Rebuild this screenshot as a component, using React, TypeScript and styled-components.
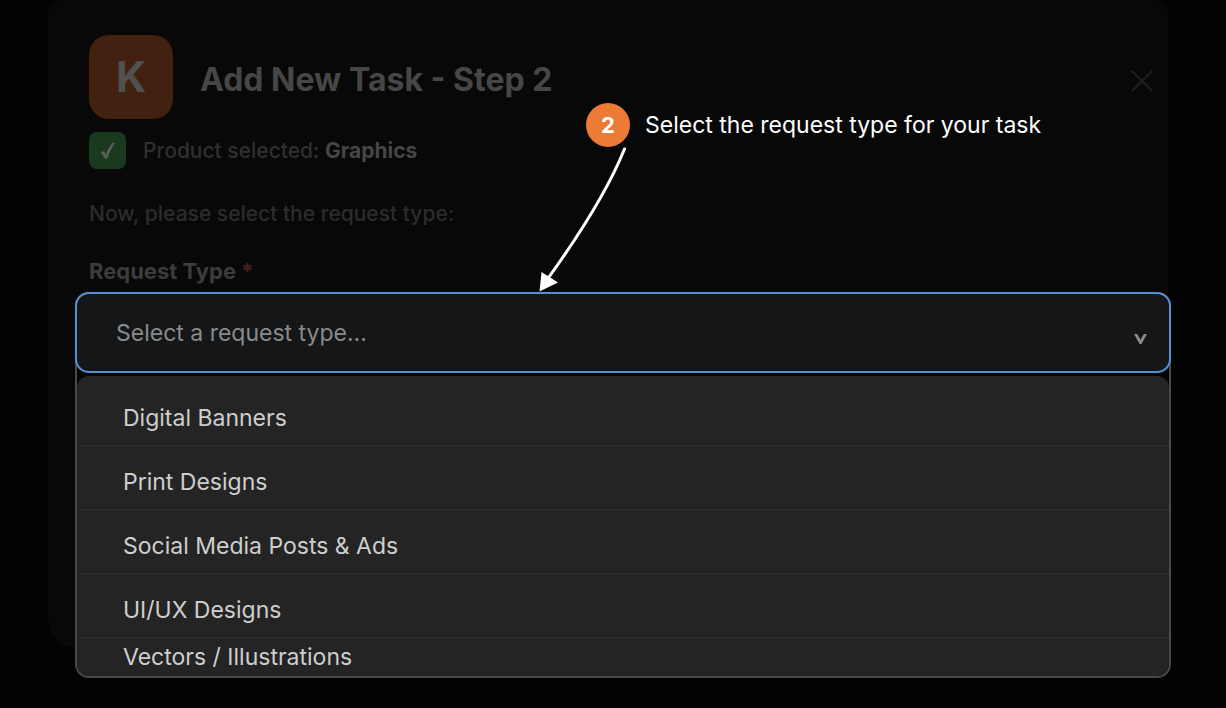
import React, { useState } from "react";
import styled, { createGlobalStyle } from "styled-components";

const GlobalStyle = createGlobalStyle`
  * { box-sizing: border-box; }
  body {
    margin: 0;
    background: #030303;
    font-family: Inter, "Liberation Sans", sans-serif;
    font-size: 22px;
    line-height: 28px;
  }
`;

const Page = styled.main`
  min-height: 100vh;
  padding: 0 58px 0 48px;
`;

const Card = styled.form`
  position: relative;
  padding: 35px 11px 275px 41px;
  border-radius: 14px 14px 28px 28px;
  background: #080808;
`;

const Header = styled.header`
  display: flex;
  align-items: center;
  gap: 27px;
`;

const Logo = styled.div`
  display: grid;
  place-items: center;
  width: 84px;
  height: 84px;
  border-radius: 20px;
  background: #422110;
  color: #505050;
  font-size: 42px;
  font-weight: 700;
`;

const Title = styled.h1`
  flex: 1;
  margin: 0;
  padding-top: 6px;
  color: #464646;
  font-size: 32px;
  line-height: 40px;
  font-weight: 700;
`;

const CloseButton = styled.button`
  display: grid;
  place-items: center;
  padding: 8px 4px 0;
  border: 0;
  background: none;
  color: #1e1e1e;
`;

const Status = styled.p`
  display: flex;
  align-items: center;
  gap: 17px;
  margin: 13px 0 0;
  color: #303030;
  font-size: 21px;
  font-weight: 500;
`;

const StatusBadge = styled.span`
  display: grid;
  place-items: center;
  width: 37px;
  height: 37px;
  border-radius: 8px;
  background: #1a3a20;
`;

const Strong = styled.strong`
  color: #464646;
  font-weight: 700;
`;

const Hint = styled.p`
  margin: 31px 0 0;
  color: #2c2c2c;
  font-size: 21px;
  font-weight: 500;
`;

const Label = styled.label`
  display: block;
  margin: 29px 0 7px;
  color: #3c3c3c;
  font-weight: 700;
`;

const Required = styled.span`
  color: #44201a;
`;

const Combo = styled.div`
  position: relative;
  margin: 0 -14px;
`;

const Field = styled.div`
  position: relative;
  z-index: 1;
`;

const Select = styled.select`
  display: block;
  width: 100%;
  height: 81px;
  padding: 0 39px;
  border: 2px solid #568fd2;
  border-radius: 14px;
  outline: 0;
  appearance: none;
  background: #141617;
  color: #8a8a8a;
  font: inherit;
  font-size: 23px;
`;

const Chevron = styled.svg`
  position: absolute;
  right: 24px;
  top: 42px;
  pointer-events: none;
`;

const Popup = styled.div`
  position: absolute;
  inset: 0 0 auto;
  padding-top: 82px;
  border: 2px solid #4a4a4a;
  border-radius: 14px;
  background: #060606;
`;

const Options = styled.ul`
  margin: 0;
  padding: 6px 0 0;
  border-radius: 12px;
  background: #242424;
  list-style: none;
`;

const Option = styled.li`
  padding: 21px 46px 12px;
  border-bottom: 1px solid #303030;
  color: #cecece;
  font-size: 23px;
  line-height: 30px;
  cursor: pointer;

  &:last-child {
    padding: 4px 46px;
    border-bottom: 0;
  }
`;

const Callout = styled.aside`
  position: absolute;
  z-index: 2;
  left: 538px;
  top: 103px;
  display: flex;
  align-items: center;
  gap: 15px;
  color: #fff;
  font-size: 23px;
  line-height: 30px;
  white-space: nowrap;
`;

const StepNumber = styled.span`
  display: grid;
  place-items: center;
  width: 44px;
  height: 44px;
  border-radius: 50%;
  background: #eb7b35;
  font-size: 22px;
  font-weight: 700;
`;

const Arrow = styled.svg`
  position: absolute;
  z-index: 2;
  left: 482px;
  top: 140px;
  pointer-events: none;
`;

const requestTypes = [
  "Digital Banners",
  "Print Designs",
  "Social Media Posts & Ads",
  "UI/UX Designs",
  "Vectors / Illustrations",
];

export default function App() {
  const [open, setOpen] = useState(true);
  const [value, setValue] = useState("");

  const choose = (type: string) => {
    setValue(type);
    setOpen(false);
  };

  return (
    <>
      <GlobalStyle />
      <Page>
        <Card>
          <Header>
            <Logo>K</Logo>
            <Title>Add New Task - Step 2</Title>
            <CloseButton type="button" aria-label="Close">
              <svg width="22" height="22" viewBox="0 0 22 22" fill="none" stroke="currentColor" strokeWidth="2.4" strokeLinecap="round">
                <path d="M1.5 1.5 20.5 20.5M20.5 1.5 1.5 20.5" />
              </svg>
            </CloseButton>
          </Header>
          <Status>
            <StatusBadge>
              <svg width="16" height="18" viewBox="0 0 16 18" fill="#585e58">
                <path d="M1 10.4C1.8 8.8 3.9 8.700 4.800 10.300L5.900 12.400C7.500 8 9.700 4 12.300 1.200C13.200.4 14.900.5 15.200 1.100C12 5 9.600 10.200 7.600 15.800C7.100 17 5 17 4.500 15.900Z" />
              </svg>
            </StatusBadge>
            <span>
              Product selected: <Strong>Graphics</Strong>
            </span>
          </Status>
          <Hint>Now, please select the request type:</Hint>
          <Label htmlFor="request-type">
            Request Type <Required>*</Required>
          </Label>
          <Combo>
            <Field>
              <Select
                id="request-type"
                required
                value={value}
                onChange={(e) => choose(e.target.value)}
                onMouseDown={(e) => {
                  e.preventDefault();
                  setOpen(!open);
                }}
              >
                <option value="">Select a request type...</option>
                {requestTypes.map((type) => (
                  <option key={type}>{type}</option>
                ))}
              </Select>
              <Chevron width="13" height="11" viewBox="0 0 13 11" fill="#8a8c8c">
                <path d="M0 0H3.200L6.500 5.800L9.800 0H13L7.400 10H5.600Z" />
              </Chevron>
            </Field>
            {open && (
              <Popup>
                <Options role="listbox" aria-label="Request types">
                  {requestTypes.map((type) => (
                    <Option key={type} role="option" aria-selected={type === value} onClick={() => choose(type)}>
                      {type}
                    </Option>
                  ))}
                </Options>
              </Popup>
            )}
          </Combo>
          <Callout>
            <StepNumber>2</StepNumber>
            <span>Select the request type for your task</span>
          </Callout>
          <Arrow width="110" height="156" viewBox="0 0 110 156" fill="none">
            <path d="M94.500 9C78 50 52 91 19 137" stroke="#fff" strokeWidth="3" strokeLinecap="round" />
            <path d="M9.500 151.500 11.500 132 28 142.500Z" fill="#fff" />
          </Arrow>
        </Card>
      </Page>
    </>
  );
}
